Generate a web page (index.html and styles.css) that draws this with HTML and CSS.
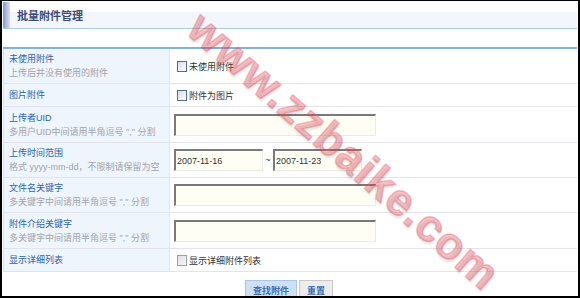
FILE: index.html
```html
<!DOCTYPE html>
<html lang="zh-CN">

<head>
    <meta charset="UTF-8">
    <title>批量附件管理</title>
    <link rel="stylesheet" href="styles.css">
</head>

<body>
    <div class="frame">
        <div class="title-bar">
            <h3>批量附件管理</h3>
        </div>

        <div class="form-table">
            <div class="row">
                <div class="label">
                    <span class="name">未使用附件</span>
                    <span class="hint">上传后并没有使用的附件</span>
                </div>
                <div class="field">
                    <label class="check"><span class="cb"></span>未使用附件</label>
                </div>
            </div>
            <div class="row short">
                <div class="label">
                    <span class="name">图片附件</span>
                </div>
                <div class="field">
                    <label class="check"><span class="cb"></span>附件为图片</label>
                </div>
            </div>
            <div class="row wide">
                <div class="label">
                    <span class="name">上传者UID</span>
                    <span class="hint">多用户UID中间请用半角逗号 "," 分割</span>
                </div>
                <div class="field">
                    <input class="txt" type="text">
                </div>
            </div>
            <div class="row">
                <div class="label">
                    <span class="name">上传时间范围</span>
                    <span class="hint">格式 yyyy-mm-dd，不限制请保留为空</span>
                </div>
                <div class="field">
                    <input class="txt date" type="text" value="2007-11-16">
                    <span class="tilde">~</span>
                    <input class="txt date" type="text" value="2007-11-23">
                </div>
            </div>
            <div class="row">
                <div class="label">
                    <span class="name">文件名关键字</span>
                    <span class="hint">多关键字中间请用半角逗号 "," 分割</span>
                </div>
                <div class="field">
                    <input class="txt" type="text">
                </div>
            </div>
            <div class="row wide">
                <div class="label">
                    <span class="name">附件介绍关键字</span>
                    <span class="hint">多关键字中间请用半角逗号 "," 分割</span>
                </div>
                <div class="field">
                    <input class="txt" type="text">
                </div>
            </div>
            <div class="row short">
                <div class="label">
                    <span class="name">显示详细列表</span>
                </div>
                <div class="field">
                    <label class="check"><span class="cb off"></span>显示详细附件列表</label>
                </div>
            </div>
        </div>

        <div class="buttons">
            <button class="btn primary">查找附件</button>
            <button class="btn">重置</button>
        </div>

        <span class="watermark">www.zzbaike.com</span>
    </div>
</body>

</html>
```

FILE: styles.css
```css
body {
    margin: 0;
    padding: 0;
    font-family: "Liberation Sans", "Noto Sans CJK SC", sans-serif;
    font-size: 9px;
    color: #333;
    background: #fff;
}

.frame {
    position: relative;
    width: 580px;
    height: 298px;
    box-sizing: border-box;
    border: 2px solid #000;
    border-top-width: 1px;
    padding: 0 1px;
    overflow: hidden;
}

.title-bar {
    display: flex;
    align-items: center;
    height: 28px;
    box-sizing: border-box;
    border-bottom: 1px solid #a9cfd6;
    background: linear-gradient(to bottom, #fff 0, #fff 11px, #f3f6fd 11px);
}

.title-bar:before {
    content: "";
    align-self: stretch;
    width: 7px;
    margin-top: 1px;
    background: linear-gradient(to right, #8797d0, #d9dff5);
}

.title-bar h3 {
    margin: 0 0 0 7px;
    font-size: 11px;
    font-weight: bold;
    color: #3b4b7a;
}

.form-table {
    margin-top: 18px;
    border-top: 2px solid #86b0d8;
}

.row {
    display: flex;
    height: 35px;
    box-sizing: border-box;
    border-bottom: 1px solid #e3e3eb;
}

.row.wide {
    height: 36px;
}

.row.short {
    height: 23px;
}

.label {
    width: 167px;
    box-sizing: border-box;
    padding-left: 5px;
    display: flex;
    flex-direction: column;
    justify-content: center;
    background-color: #eef5fd;
    border-left: 1px solid #d3dfec;
    border-right: 1px solid #e3e8f0;
}

.label .name {
    line-height: 14px;
    color: #2f62ab;
}

.label .hint {
    line-height: 14px;
    color: #a3a3ab;
}

.field {
    flex: 1;
    display: flex;
    align-items: center;
    padding-left: 4px;
}

.check {
    display: flex;
    align-items: center;
    margin-left: 3px;
    color: #333;
}

.cb {
    width: 8px;
    height: 9px;
    margin-right: 2px;
    border: 1px solid #4d6d92;
    background: linear-gradient(to bottom right, #d6dde6, #fff);
}

.cb.off {
    border-color: #8fa4ba;
    background: linear-gradient(to bottom right, #e2e2e2, #f6f6f6);
}

.txt {
    width: 202px;
    height: 22px;
    box-sizing: border-box;
    margin: 0;
    padding: 0 0 0 1px;
    border-top: 2px solid #7a7a7a;
    border-left: 2px solid #7a7a7a;
    border-right: 1px solid #ecece4;
    border-bottom: 1px solid #ecece4;
    background-color: #fffef4;
    font-family: "Liberation Sans", sans-serif;
    font-size: 9px;
    color: #333;
    outline: none;
}

.txt.date {
    width: 89px;
}

.tilde {
    width: 10px;
    text-align: center;
    color: #333;
}

.buttons {
    display: flex;
    justify-content: center;
    gap: 2px;
    margin-top: 8px;
    padding-right: 2px;
}

.btn {
    height: 21px;
    padding: 0 7px;
    font-family: "Noto Sans CJK SC", sans-serif;
    font-size: 9px;
    font-weight: bold;
    color: #3b6db5;
    background-color: #ececec;
    border: 1px solid #c9c9c9;
}

.btn.primary {
    width: 52px;
    background-color: #cfe0f6;
    border-color: #a8c5e6;
}

.watermark {
    position: absolute;
    left: 342px;
    top: 150px;
    transform: translate(-50%, -50%) rotate(41deg);
    font-family: "Liberation Sans", sans-serif;
    font-size: 45px;
    font-weight: bold;
    letter-spacing: 1px;
    white-space: nowrap;
    color: rgba(232, 84, 98, 0.36);
    -webkit-text-stroke: 1.5px rgba(232, 84, 98, 0.36);
    text-shadow: 2px 2px 2px rgba(0, 0, 0, 0.1);
    pointer-events: none;
}
```
